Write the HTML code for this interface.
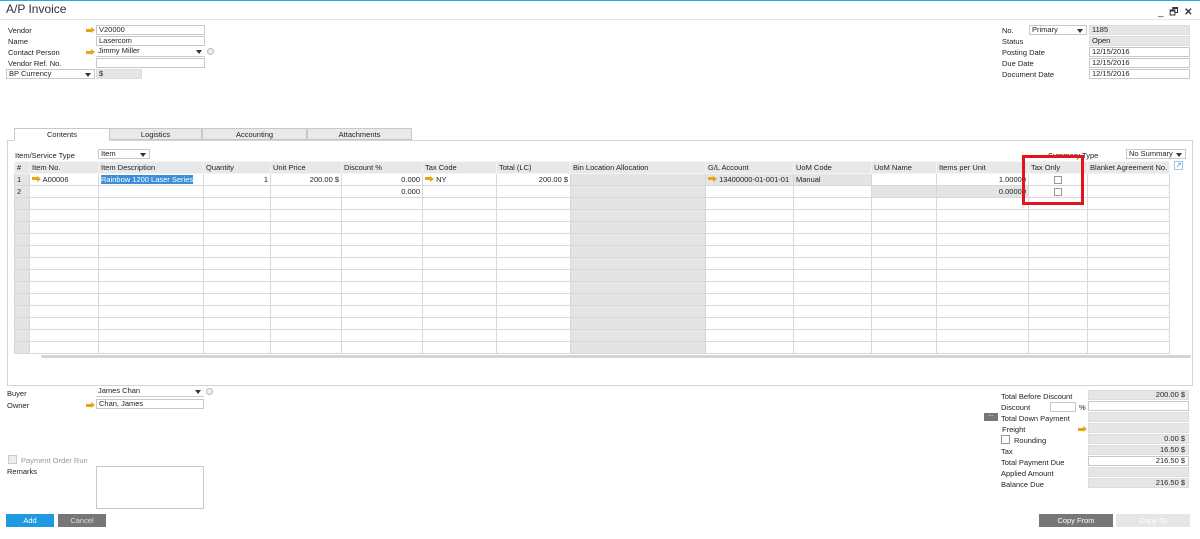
<!DOCTYPE html>
<html><head><meta charset="utf-8"><style>
*{box-sizing:border-box;margin:0;padding:0}
body{width:1200px;height:539px;background:#fff;font-family:"Liberation Sans",sans-serif;font-size:7.5px;color:#222;position:relative;overflow:hidden}
.a{position:absolute}
.in{position:absolute;height:10px;border:1px solid #c8c8c8;background:#fff;padding-left:2px;line-height:8px;white-space:nowrap}
.g{background:#e6e6e6;border-color:#ddd}
.ar{position:absolute;width:9px;height:6px}
.ar:before{content:"";position:absolute;left:0;top:1.5px;width:5px;height:3px;background:#e8a317}
.ar:after{content:"";position:absolute;left:5px;top:0;border-left:4px solid #e8a317;border-top:3px solid transparent;border-bottom:3px solid transparent}
.dd:after{content:"";position:absolute;right:3px;top:3px;border-top:4px solid #333;border-left:3px solid transparent;border-right:3px solid transparent}
.tab{position:absolute;top:128px;height:12px;border:1px solid #c8c8c8;background:#e9e9e9;text-align:center;line-height:11px}
table{border-collapse:collapse;table-layout:fixed;position:absolute;left:14px;top:161px}
td{border:1px solid #d8d8d8;height:12px;padding:0 2px;white-space:nowrap;overflow:hidden;font-size:7.5px;line-height:10px}
tr.h td{background:#e8e8e8;border-color:#f4f4f4}
.gc{background:#e4e4e4}
.r{text-align:right}
.cb{display:inline-block;width:8px;height:8px;border:1px solid #999;background:#fff;vertical-align:middle}
.lb{position:absolute;white-space:nowrap}
.btn{position:absolute;height:13px;color:#fff;text-align:center;line-height:13px;font-size:7.5px}
</style></head><body>
<div class="a" style="left:0;top:0;width:1200px;height:1px;background:#2aa7e4"></div>
<div class="a" style="left:6px;top:2px;font-size:12px;color:#333">A/P Invoice</div>
<div class="a" style="left:0;top:19px;width:1200px;height:1px;background:#e4e4e4"></div>
<div class="a" style="left:1158px;top:5px;font-size:10px;color:#333">_&nbsp;&nbsp;&#x1F5D7;&nbsp;&nbsp;<b>✕</b></div>

<div class="lb" style="left:8px;top:26px">Vendor</div>
<div class="lb" style="left:8px;top:37px">Name</div>
<div class="lb" style="left:8px;top:48px">Contact Person</div>
<div class="lb" style="left:8px;top:59px">Vendor Ref. No.</div>
<div class="in dd" style="left:6px;top:69px;width:89px">BP Currency</div>
<div class="ar" style="left:86px;top:27px"></div>
<div class="ar" style="left:86px;top:49px"></div>
<div class="in" style="left:96px;top:25px;width:109px">V20000</div>
<div class="in" style="left:96px;top:36px;width:109px">Lasercom</div>
<div class="in dd" style="left:96px;top:47px;width:109px;border:none;border-bottom:1px solid #ccc">Jimmy Miller</div>
<div class="a" style="left:207px;top:48px;width:7px;height:7px;border-radius:50%;border:1px solid #bbb;background:#eee"></div>
<div class="in" style="left:96px;top:58px;width:109px"></div>
<div class="in g" style="left:96px;top:69px;width:46px">$</div>

<div class="lb" style="left:1002px;top:26px">No.</div>
<div class="lb" style="left:1002px;top:37px">Status</div>
<div class="lb" style="left:1002px;top:48px">Posting Date</div>
<div class="lb" style="left:1002px;top:59px">Due Date</div>
<div class="lb" style="left:1002px;top:70px">Document Date</div>
<div class="in dd" style="left:1029px;top:25px;width:58px">Primary</div>
<div class="in g" style="left:1089px;top:25px;width:101px">1185</div>
<div class="in g" style="left:1089px;top:36px;width:101px">Open</div>
<div class="in" style="left:1089px;top:47px;width:101px">12/15/2016</div>
<div class="in" style="left:1089px;top:58px;width:101px">12/15/2016</div>
<div class="in" style="left:1089px;top:69px;width:101px">12/15/2016</div>

<div class="a" style="left:7px;top:140px;width:1186px;height:246px;border:1px solid #d4d4d4"></div>
<div class="tab" style="left:14px;width:96px;background:#fff;border-bottom-color:#fff;height:13px">Contents</div>
<div class="tab" style="left:109px;width:93px">Logistics</div>
<div class="tab" style="left:202px;width:105px">Accounting</div>
<div class="tab" style="left:307px;width:105px">Attachments</div>

<div class="lb" style="left:15px;top:151px">Item/Service Type</div>
<div class="in dd" style="left:98px;top:149px;width:52px">Item</div>
<div class="lb" style="left:1048px;top:151px">Summary Type</div>
<div class="in dd" style="left:1126px;top:149px;width:60px">No Summary</div>
<div class="a" style="left:1174px;top:161px;width:9px;height:9px;border:1px solid #9cc9ea;color:#2a8fd4;font-size:7px;line-height:7px;text-align:center">↗</div>

<table>
<colgroup><col style="width:15px"><col style="width:69px"><col style="width:105px"><col style="width:67px"><col style="width:71px"><col style="width:81px"><col style="width:74px"><col style="width:74px"><col style="width:135px"><col style="width:88px"><col style="width:78px"><col style="width:65px"><col style="width:92px"><col style="width:59px"><col style="width:79px"></colgroup>
<tr class="h"><td>#</td><td>Item No.</td><td>Item Description</td><td>Quantity</td><td>Unit Price</td><td>Discount %</td><td>Tax Code</td><td>Total (LC)</td><td>Bin Location Allocation</td><td>G/L Account</td><td>UoM Code</td><td>UoM Name</td><td>Items per Unit</td><td>Tax Only</td><td>Blanket Agreement No.</td></tr>
<tr><td class="gc">1</td><td><span class="ar" style="position:relative;display:inline-block;top:0"></span> A00006</td><td><span style="background:#3b8fd9;color:#fff">Rainbow 1200 Laser Series</span></td><td class="r">1</td><td class="r">200.00 $</td><td class="r">0.000</td><td><span class="ar" style="position:relative;display:inline-block"></span> NY</td><td class="r">200.00 $</td><td class="gc"></td><td class="gc"><span class="ar" style="position:relative;display:inline-block"></span> 13400000-01-001-01</td><td class="gc">Manual</td><td></td><td class="r">1.00000</td><td style="text-align:center"><span class="cb"></span></td><td></td></tr>
<tr><td class="gc">2</td><td></td><td></td><td></td><td></td><td class="r">0.000</td><td></td><td></td><td class="gc"></td><td></td><td></td><td class="gc"></td><td class="gc r">0.00000</td><td style="text-align:center"><span class="cb"></span></td><td></td></tr>
<tr><td class="gc"></td><td></td><td></td><td></td><td></td><td></td><td></td><td></td><td class="gc"></td><td></td><td></td><td></td><td></td><td></td><td></td></tr>
<tr><td class="gc"></td><td></td><td></td><td></td><td></td><td></td><td></td><td></td><td class="gc"></td><td></td><td></td><td></td><td></td><td></td><td></td></tr>
<tr><td class="gc"></td><td></td><td></td><td></td><td></td><td></td><td></td><td></td><td class="gc"></td><td></td><td></td><td></td><td></td><td></td><td></td></tr>
<tr><td class="gc"></td><td></td><td></td><td></td><td></td><td></td><td></td><td></td><td class="gc"></td><td></td><td></td><td></td><td></td><td></td><td></td></tr>
<tr><td class="gc"></td><td></td><td></td><td></td><td></td><td></td><td></td><td></td><td class="gc"></td><td></td><td></td><td></td><td></td><td></td><td></td></tr>
<tr><td class="gc"></td><td></td><td></td><td></td><td></td><td></td><td></td><td></td><td class="gc"></td><td></td><td></td><td></td><td></td><td></td><td></td></tr>
<tr><td class="gc"></td><td></td><td></td><td></td><td></td><td></td><td></td><td></td><td class="gc"></td><td></td><td></td><td></td><td></td><td></td><td></td></tr>
<tr><td class="gc"></td><td></td><td></td><td></td><td></td><td></td><td></td><td></td><td class="gc"></td><td></td><td></td><td></td><td></td><td></td><td></td></tr>
<tr><td class="gc"></td><td></td><td></td><td></td><td></td><td></td><td></td><td></td><td class="gc"></td><td></td><td></td><td></td><td></td><td></td><td></td></tr>
<tr><td class="gc"></td><td></td><td></td><td></td><td></td><td></td><td></td><td></td><td class="gc"></td><td></td><td></td><td></td><td></td><td></td><td></td></tr>
<tr><td class="gc"></td><td></td><td></td><td></td><td></td><td></td><td></td><td></td><td class="gc"></td><td></td><td></td><td></td><td></td><td></td><td></td></tr>
<tr><td class="gc"></td><td></td><td></td><td></td><td></td><td></td><td></td><td></td><td class="gc"></td><td></td><td></td><td></td><td></td><td></td><td></td></tr>
<tr><td class="gc"></td><td></td><td></td><td></td><td></td><td></td><td></td><td></td><td class="gc"></td><td></td><td></td><td></td><td></td><td></td><td></td></tr>
</table>
<div class="a" style="left:41px;top:355px;width:1150px;height:3px;border-radius:2px;background:#d4d4d4"></div>
<div class="a" style="left:1022px;top:155px;width:62px;height:50px;border:3px solid #e3141d"></div>

<div class="lb" style="left:7px;top:389px">Buyer</div>
<div class="lb" style="left:7px;top:401px">Owner</div>
<div class="in dd" style="left:96px;top:387px;width:108px;border:none;border-bottom:1px solid #ccc">James Chan</div>
<div class="a" style="left:206px;top:388px;width:7px;height:7px;border-radius:50%;border:1px solid #bbb;background:#eee"></div>
<div class="ar" style="left:86px;top:402px"></div>
<div class="in" style="left:96px;top:399px;width:108px">Chan, James</div>
<div class="a" style="left:8px;top:455px;width:9px;height:9px;border:1px solid #ccc;background:#eee"></div>
<div class="lb" style="left:21px;top:456px;color:#999">Payment Order Run</div>
<div class="lb" style="left:7px;top:467px">Remarks</div>
<div class="a" style="left:96px;top:466px;width:108px;height:43px;border:1px solid #c8c8c8"></div>
<div class="btn" style="left:6px;top:514px;width:48px;background:#1e9be0">Add</div>
<div class="btn" style="left:58px;top:514px;width:48px;background:#777;color:#ddd">Cancel</div>

<div class="lb" style="left:1001px;top:392px">Total Before Discount</div>
<div class="lb" style="left:1001px;top:403px">Discount</div>
<div class="in" style="left:1050px;top:402px;width:26px"></div>
<div class="lb" style="left:1079px;top:403px">%</div>
<div class="a" style="left:984px;top:413px;width:14px;height:8px;background:#777;color:#fff;font-size:6px;line-height:5px;text-align:center">...</div>
<div class="lb" style="left:1001px;top:414px">Total Down Payment</div>
<div class="lb" style="left:1002px;top:425px">Freight</div>
<div class="ar" style="left:1078px;top:426px"></div>
<div class="a" style="left:1001px;top:435px;width:9px;height:9px;border:1px solid #999"></div>
<div class="lb" style="left:1014px;top:436px">Rounding</div>
<div class="lb" style="left:1001px;top:447px">Tax</div>
<div class="lb" style="left:1001px;top:458px">Total Payment Due</div>
<div class="lb" style="left:1001px;top:469px">Applied Amount</div>
<div class="lb" style="left:1001px;top:480px">Balance Due</div>
<div class="in g r" style="left:1088px;top:390px;width:101px;padding-right:3px">200.00 $</div>
<div class="in" style="left:1088px;top:401px;width:101px"></div>
<div class="in g" style="left:1088px;top:412px;width:101px"></div>
<div class="in g" style="left:1088px;top:423px;width:101px"></div>
<div class="in g r" style="left:1088px;top:434px;width:101px;padding-right:3px">0.00 $</div>
<div class="in g r" style="left:1088px;top:445px;width:101px;padding-right:3px">16.50 $</div>
<div class="in r" style="left:1088px;top:456px;width:101px;padding-right:3px">216.50 $</div>
<div class="in g" style="left:1088px;top:467px;width:101px"></div>
<div class="in g r" style="left:1088px;top:478px;width:101px;padding-right:3px">216.50 $</div>
<div class="btn" style="left:1039px;top:514px;width:74px;background:#777">Copy From</div>
<div class="btn" style="left:1116px;top:514px;width:74px;background:#e6e6e6;color:#fff">Copy To</div>
</body></html>
